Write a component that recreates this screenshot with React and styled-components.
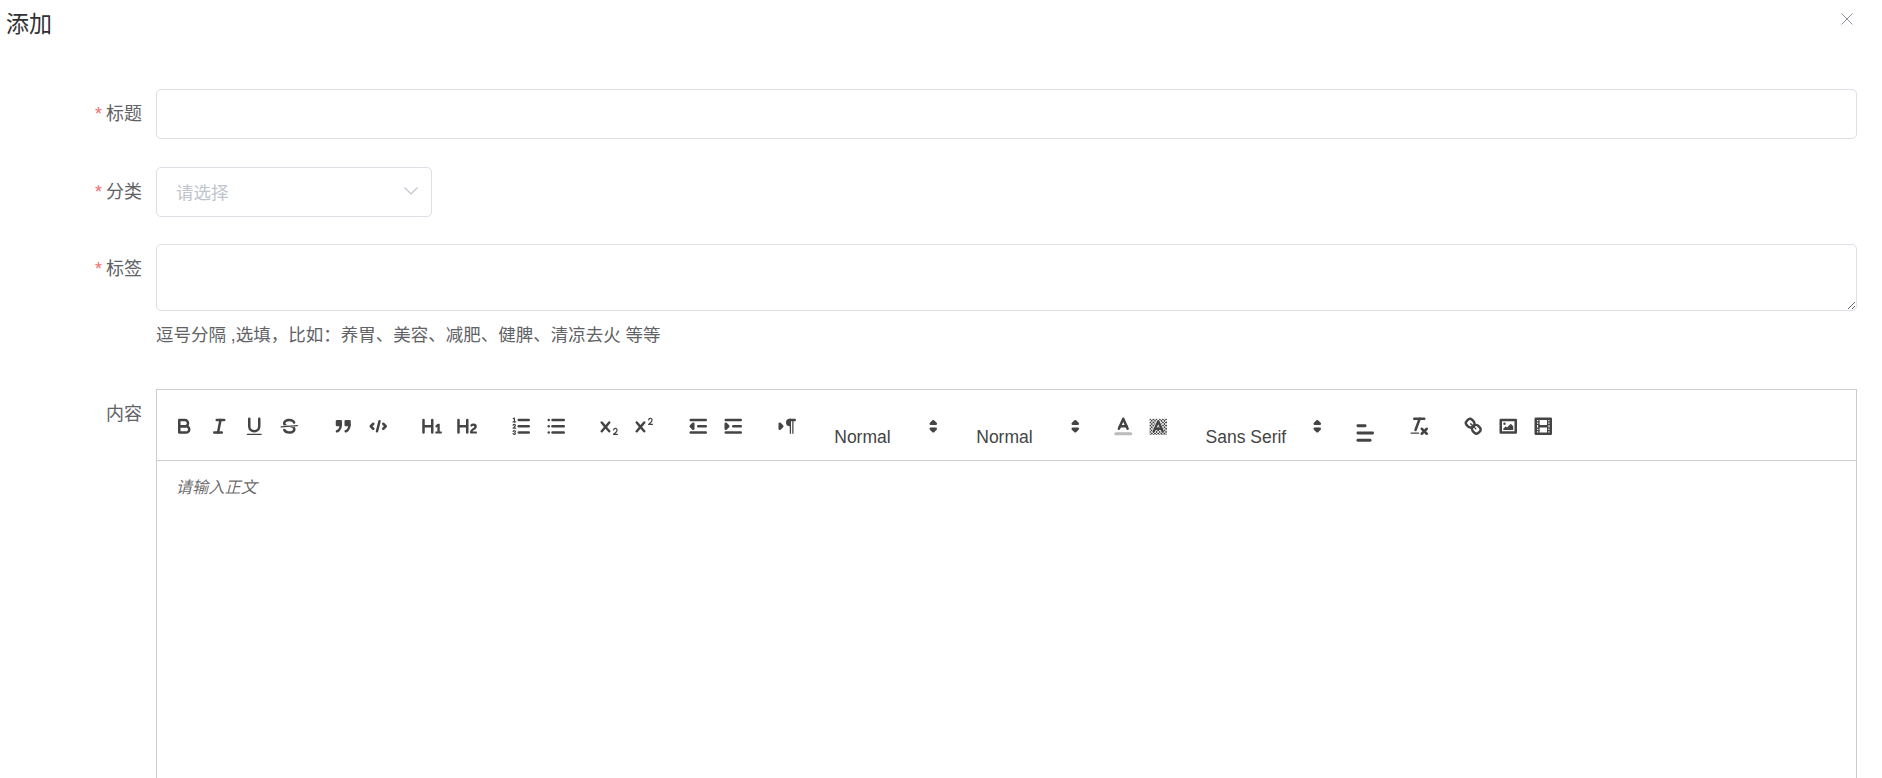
import React from 'react';
import styled, { createGlobalStyle } from 'styled-components';

const GlobalStyle = createGlobalStyle`
  html, body {
    margin: 0;
    height: 100%;
    overflow: hidden;
    background: #fff;
  }
  body {
    font-family: "Liberation Sans", "Noto Sans CJK SC", sans-serif;
  }
`

const Page = styled.div`
  height: 778px;
  overflow: hidden;
  font-family: "Liberation Sans", "Noto Sans CJK SC", sans-serif;
`

const Header = styled.div`
  display: flex;
  justify-content: space-between;
  height: 89px;
  padding: 10px 29px 0 6px;
  box-sizing: border-box;
`

const Title = styled.div`
  font-size: 23px;
  line-height: 28px;
  color: #303133;
`

const CloseButton = styled.div`
  width: 12px;
  height: 12px;
  margin-top: 3px;
  line-height: 0;
`

const Row = styled.div`
  display: flex;
  margin-bottom: ${props => props.gap}px;
  padding-right: 25px;
`

const RowLabel = styled.label`
  flex: 0 0 156px;
  height: 50px;
  box-sizing: border-box;
  padding: 1px 14px 0 0;
  text-align: right;
  font-size: 18px;
  line-height: 49px;
  color: #606266;
`

const Required = styled.span`
  color: #f56c6c;
  margin-right: 4px;
`

const Field = styled.div`
  flex: 1;
  min-width: 0;
`

const TextInput = styled.input`
  display: block;
  width: 100%;
  height: 50px;
  box-sizing: border-box;
  border: 1px solid #dcdfe6;
  border-radius: 5px;
  outline: none;
  background: #fff;
`

const SelectBox = styled.div`
  display: flex;
  align-items: center;
  justify-content: space-between;
  width: 276px;
  height: 50px;
  box-sizing: border-box;
  border: 1px solid #dcdfe6;
  border-radius: 5px;
  padding: 0 13px 2px 19px;
  font-size: 17.5px;
  color: #c0c4cc;
`

const Chevron = styled.svg`
  width: 14px;
  height: 8px;
`

const TextArea = styled.textarea`
  display: block;
  width: 100%;
  height: 67px;
  box-sizing: border-box;
  border: 1px solid #dcdfe6;
  border-radius: 5px;
  outline: none;
  resize: vertical;
  background: #fff;
`

const Help = styled.div`
  margin-top: 9px;
  font-size: 17.5px;
  line-height: 30px;
  color: #606266;
  white-space: pre;
`

const Editor = styled.div`
  height: 560px;
  border: 1px solid #ccc;
  box-sizing: border-box;
`

const Toolbar = styled.div`
  display: flex;
  align-items: center;
  height: 71px;
  padding: 2px 0 0 10px;
  box-sizing: border-box;
  border-bottom: 1px solid #ccc;
`

const ToolGroup = styled.div`
  display: flex;
  align-items: center;
  margin-right: 18.75px;
`

const ToolButton = styled.div`
  flex: 0 0 35px;
  height: 30px;
  padding: 3.75px 6.25px;
  box-sizing: border-box;
  line-height: 0;
`

const ToolSvg = styled.svg`
  width: 22.5px;
  height: 22.5px;
  overflow: visible;

  .s {
    fill: none;
    stroke: #444;
    stroke-width: 2;
    stroke-linecap: round;
    stroke-linejoin: round;
  }
  .t {
    fill: none;
    stroke: #444;
    stroke-width: 1;
    stroke-linecap: round;
    stroke-linejoin: round;
  }
  .f {
    fill: #444;
  }
  .fs {
    fill: #444;
    stroke: #444;
    stroke-width: 2;
    stroke-linecap: round;
    stroke-linejoin: round;
  }
  .arrow {
    fill: #444;
    stroke: #444;
    stroke-width: 2;
    stroke-linejoin: round;
  }
  .label {
    fill: none;
    stroke: #bbb;
    stroke-width: 2.4;
    stroke-linecap: round;
  }
  .halo {
    fill: none;
    stroke: #fff;
    stroke-width: 3;
    stroke-linejoin: round;
  }
`

const Picker = styled.div`
  flex: 0 0 ${props => props.width}px;
  display: flex;
  align-items: center;
  padding-left: 11px;
  box-sizing: border-box;
`

const PickerText = styled.span`
  flex: 0 0 ${props => props.width}px;
  padding-top: 22px;
  font-size: 17.5px;
  line-height: 22px;
  color: #444;
`

const AlignButton = styled.div`
  flex: 0 0 35px;
  padding: 14px 6.25px 0;
  box-sizing: border-box;
  line-height: 0;
`

const AlignSvg = styled(ToolSvg)`
  height: 26px;
`

const EditorBody = styled.div`
  padding: 15px 18.75px;
  font-size: 16.25px;
  line-height: 23px;
  font-style: italic;
  color: rgba(0, 0, 0, 0.6);
`

const Icon = ({ children }) => (
  <ToolButton>
    <ToolSvg viewBox="0 0 18 18">{children}</ToolSvg>
  </ToolButton>
)

const Arrows = () => (
  <ToolSvg viewBox="0 0 18 18">
    <polygon className="arrow" points="7 11 9 13 11 11 7 11" />
    <polygon className="arrow" points="7 7 9 5 11 7 7 7" />
  </ToolSvg>
)

const PickerBox = ({ label, width, textWidth }) => (
  <Picker width={width}>
    <PickerText width={textWidth}>{label}</PickerText>
    <Arrows />
  </Picker>
)

const xMark = "M9.65,5.241a1,1,0,0,0-1.409.108L6,7.964,3.759,5.349A1,1,0,0,0,2.192,6.59178Q2.21835,6.6255,2.247,6.657L4.684,9.5,2.247,12.343A1,1,0,0,0,3.762,13.65L6,11.036l2.241,2.615a1,1,0,0,0,1.519-1.3L7.316,9.5,9.753,6.657A1,1,0,0,0,9.65,5.241Z"

export default function App() {
  return (
    <Page>
      <GlobalStyle />
      <Header>
        <Title>添加</Title>
        <CloseButton>
          <svg width="12" height="12" viewBox="0 0 12 12">
            <path d="M0.5 0.5L11.5 11.5M11.5 0.5L0.5 11.5" stroke="#909399" strokeWidth="1" fill="none" />
          </svg>
        </CloseButton>
      </Header>

      <Row gap={28}>
        <RowLabel><Required>*</Required>标题</RowLabel>
        <Field><TextInput /></Field>
      </Row>

      <Row gap={27}>
        <RowLabel><Required>*</Required>分类</RowLabel>
        <Field>
          <SelectBox>
            请选择
            <Chevron viewBox="0 0 14 8">
              <path d="M0.5 0.5L7 7L13.5 0.5" stroke="#c0c4cc" strokeWidth="1.2" fill="none" />
            </Chevron>
          </SelectBox>
        </Field>
      </Row>

      <Row gap={39}>
        <RowLabel><Required>*</Required>标签</RowLabel>
        <Field>
          <TextArea />
          <Help>逗号分隔 ,选填，比如：养胃、美容、减肥、健脾、清凉去火 等等</Help>
        </Field>
      </Row>

      <Row gap={0}>
        <RowLabel>内容</RowLabel>
        <Field>
          <Editor>
            <Toolbar>
              <ToolGroup>
                <Icon>
                  <path className="s" d="M5,4H9.5A2.5,2.5,0,0,1,12,6.5v0A2.5,2.5,0,0,1,9.5,9H5A0,0,0,0,1,5,9V4A0,0,0,0,1,5,4Z" />
                  <path className="s" d="M5,9h5.5A2.5,2.5,0,0,1,13,11.5v0A2.5,2.5,0,0,1,10.5,14H5a0,0,0,0,1,0,0V9A0,0,0,0,1,5,9Z" />
                </Icon>
                <Icon>
                  <line className="s" x1="7" x2="13" y1="4" y2="4" />
                  <line className="s" x1="5" x2="11" y1="14" y2="14" />
                  <line className="s" x1="8" x2="10" y1="14" y2="4" />
                </Icon>
                <Icon>
                  <path className="s" d="M5,3V9a4.012,4.012,0,0,0,4,4H9a4.012,4.012,0,0,0,4-4V3" />
                  <rect className="f" height="1" rx=".5" ry=".5" width="12" x="3" y="15" />
                </Icon>
                <Icon>
                  <line className="t" x1="15.5" x2="2.5" y1="8.5" y2="9.5" />
                  <path className="f" d="M9.007,8C6.542,7.791,6,7.519,6,6.5,6,5.792,7.283,5,9,5c1.571,0,2.765.679,2.969,1.309a1,1,0,0,0,1.9-.617C13.356,4.106,11.354,3,9,3,6.2,3,4,4.538,4,6.5a3.2,3.2,0,0,0,.5,1.843Z" />
                  <path className="f" d="M8.984,10C11.457,10.208,12,10.479,12,11.5c0,.708-1.283,1.5-3,1.5-1.571,0-2.765-.679-2.969-1.309a1,1,0,1,0-1.9.617C4.644,13.894,6.646,15,9,15c2.8,0,5-1.538,5-3.5a3.2,3.2,0,0,0-.5-1.843Z" />
                </Icon>
              </ToolGroup>

              <ToolGroup>
                <Icon>
                  <rect className="fs" height="3" width="3" x="4" y="5" />
                  <rect className="fs" height="3" width="3" x="11" y="5" />
                  <path className="s" d="M7,8c0,4.031-3,5-3,5" />
                  <path className="s" d="M14,8c0,4.031-3,5-3,5" />
                </Icon>
                <Icon>
                  <polyline className="s" points="5 7 3 9 5 11" />
                  <polyline className="s" points="13 7 15 9 13 11" />
                  <line className="s" x1="10" x2="8" y1="5" y2="13" />
                </Icon>
              </ToolGroup>

              <ToolGroup>
                <Icon>
                  <path className="f" d="M10,4V14a1,1,0,0,1-2,0V10H3v4a1,1,0,0,1-2,0V4A1,1,0,0,1,3,4V8H8V4a1,1,0,0,1,2,0Zm6.06787,9.209H14.98975V7.59082a.54085.54085,0,0,0-.605-.60547h-.62744a1.01119,1.01119,0,0,0-.748.29688L11.645,8.56641a.5435.5435,0,0,0-.022.8584l.28613.30762a.53861.53861,0,0,0,.84717.0332l.09912-.08789a1.2137,1.2137,0,0,0,.2417-.35254h.02246s-.01123.30859-.01123.60547V13.209H12.041a.54085.54085,0,0,0-.605.60547v.43945a.54085.54085,0,0,0,.605.60547h4.02686a.54085.54085,0,0,0,.605-.60547v-.43945A.54085.54085,0,0,0,16.06787,13.209Z" />
                </Icon>
                <Icon>
                  <path className="f" d="M16.73975,13.81445v.43945a.54085.54085,0,0,1-.605.60547H11.855a.58392.58392,0,0,1-.64893-.60547V14.0127c0-2.90527,3.39941-3.42187,3.39941-4.55469a.77675.77675,0,0,0-.84717-.78125,1.17684,1.17684,0,0,0-.83594.38477c-.2749.26367-.561.374-.85791.13184l-.4292-.34082c-.30811-.24219-.38525-.51758-.1543-.81445a2.97155,2.97155,0,0,1,2.45361-1.17676,2.45393,2.45393,0,0,1,2.68408,2.40918c0,2.45312-3.1792,2.92676-3.27832,3.93848h2.79443A.54085.54085,0,0,1,16.73975,13.81445ZM9,3A.99974.99974,0,0,0,8,4V8H3V4A1,1,0,0,0,1,4V14a1,1,0,0,0,2,0V10H8v4a1,1,0,0,0,2,0V4A.99974.99974,0,0,0,9,3Z" />
                </Icon>
              </ToolGroup>

              <ToolGroup>
                <Icon>
                  <line className="s" x1="7" x2="15" y1="4" y2="4" />
                  <line className="s" x1="7" x2="15" y1="9" y2="9" />
                  <line className="s" x1="7" x2="15" y1="14" y2="14" />
                  <line className="t" x1="2.5" x2="4.5" y1="5.5" y2="5.5" />
                  <path className="f" d="M3.5,6A0.5,0.5,0,0,1,3,5.5V3.085l-0.276.138A0.5,0.5,0,0,1,2.053,3c-0.124-.247-0.023-0.324.224-0.447l1-.5A0.5,0.5,0,0,1,4,2.5v3A0.5,0.5,0,0,1,3.5,6Z" />
                  <path className="t" d="M4.5,10.5h-2c0-.234,1.85-1.076,1.85-2.234A0.959,0.959,0,0,0,2.5,8.156" />
                  <path className="t" d="M2.5,14.846a0.959,0.959,0,0,0,1.85-.109A0.7,0.7,0,0,0,3.75,14a0.688,0.688,0,0,0,.6-0.736,0.959,0.959,0,0,0-1.85-.109" />
                </Icon>
                <Icon>
                  <line className="s" x1="6" x2="15" y1="4" y2="4" />
                  <line className="s" x1="6" x2="15" y1="9" y2="9" />
                  <line className="s" x1="6" x2="15" y1="14" y2="14" />
                  <line className="s" x1="3" x2="3" y1="4" y2="4" />
                  <line className="s" x1="3" x2="3" y1="9" y2="9" />
                  <line className="s" x1="3" x2="3" y1="14" y2="14" />
                </Icon>
              </ToolGroup>

              <ToolGroup>
                <Icon>
                  <path className="f" d="M15.5,15H13.861a3.858,3.858,0,0,0,1.914-2.975,1.8,1.8,0,0,0-1.6-1.751A1.921,1.921,0,0,0,12.021,11.7a0.50013,0.50013,0,1,0,.957.291h0a0.914,0.914,0,0,1,1.053-.725,0.81,0.81,0,0,1,.744.762c0,1.076-1.16971,1.86982-1.93971,2.43082A1.45639,1.45639,0,0,0,12,15.5a0.5,0.5,0,0,0,.5.5h3A0.5,0.5,0,0,0,15.5,15Z" />
                  <path className="f" d={xMark} />
                </Icon>
                <Icon>
                  <path className="f" d="M15.5,7H13.861a4.015,4.015,0,0,0,1.914-2.975,1.8,1.8,0,0,0-1.6-1.751A1.922,1.922,0,0,0,12.021,3.7a0.5,0.5,0,1,0,.957.291,0.917,0.917,0,0,1,1.053-.725,0.81,0.81,0,0,1,.744.762c0,1.077-1.164,1.925-1.934,2.486A1.423,1.423,0,0,0,12,7.5a0.5,0.5,0,0,0,.5.5h3A0.5,0.5,0,0,0,15.5,7Z" />
                  <path className="f" d={xMark} />
                </Icon>
              </ToolGroup>

              <ToolGroup>
                <Icon>
                  <line className="s" x1="3" x2="15" y1="14" y2="14" />
                  <line className="s" x1="3" x2="15" y1="4" y2="4" />
                  <line className="s" x1="9" x2="15" y1="9" y2="9" />
                  <polyline className="fs" points="5 7 5 11 3 9 5 7" />
                </Icon>
                <Icon>
                  <line className="s" x1="3" x2="15" y1="14" y2="14" />
                  <line className="s" x1="3" x2="15" y1="4" y2="4" />
                  <line className="s" x1="9" x2="15" y1="9" y2="9" />
                  <polyline className="fs" points="3 7 3 11 5 9 3 7" />
                </Icon>
              </ToolGroup>

              <ToolGroup>
                <Icon>
                  <polygon className="fs" points="3 11 5 9 3 7 3 11" />
                  <line className="s" x1="15" x2="11" y1="4" y2="4" />
                  <path className="f" d="M11,3a3,3,0,0,0,0,6h1V3H11Z" />
                  <rect className="f" height="11" width="1" x="11" y="4" />
                  <rect className="f" height="11" width="1" x="13" y="4" />
                </Icon>
              </ToolGroup>

              <PickerBox label="Normal" width={142} textWidth={87.5} />
              <PickerBox label="Normal" width={140.5} textWidth={88} />

              <ToolGroup>
                <Icon>
                  <line className="label" x1="3" x2="15" y1="15" y2="15" />
                  <polyline className="s" points="5.5 11 9 3 12.5 11" />
                  <line className="s" x1="11.63" x2="6.38" y1="9" y2="9" />
                </Icon>
                <ToolButton>
                  <ToolSvg viewBox="0 0 18 18">
                    <defs>
                      <pattern id="hatch" width="1.8" height="1.8" patternUnits="userSpaceOnUse" patternTransform="rotate(45)">
                        <rect width="1.3" height="1.3" fill="#444" />
                      </pattern>
                    </defs>
                    <rect x="2" y="3" width="14" height="13" fill="url(#hatch)" />
                    <polyline className="halo" points="5.5 13 9 5 12.5 13" />
                    <polyline className="s" points="5.5 13 9 5 12.5 13" />
                    <line className="s" x1="11.63" x2="6.38" y1="11" y2="11" />
                  </ToolSvg>
                </ToolButton>
              </ToolGroup>

              <PickerBox label="Sans Serif" width={153.5} textWidth={100} />

              <ToolGroup>
                <AlignButton>
                  <AlignSvg viewBox="0 0 18 18" preserveAspectRatio="none">
                    <line className="s" x1="3" x2="15" y1="9" y2="9" />
                    <line className="s" x1="3" x2="13" y1="14" y2="14" />
                    <line className="s" x1="3" x2="9" y1="4" y2="4" />
                  </AlignSvg>
                </AlignButton>
              </ToolGroup>

              <ToolGroup>
                <Icon>
                  <line className="s" x1="5" x2="13" y1="3" y2="3" />
                  <line className="s" x1="6" x2="9.35" y1="12" y2="3" />
                  <line className="s" x1="11" x2="15" y1="11" y2="15" />
                  <line className="s" x1="15" x2="11" y1="11" y2="15" />
                  <rect className="f" height="1" rx=".5" ry=".5" width="7" x="2" y="14" />
                </Icon>
              </ToolGroup>

              <ToolGroup>
                <Icon>
                  <line className="t" x1="7" x2="11" y1="7" y2="11" />
                  <path className="s" d="M8.9,4.577a3.476,3.476,0,0,1,.36,4.679A3.476,3.476,0,0,1,4.577,8.9C3.185,7.5,2.035,6.4,4.217,4.217S7.5,3.185,8.9,4.577Z" />
                  <path className="s" d="M13.423,9.1a3.476,3.476,0,0,0-4.679-.36,3.476,3.476,0,0,0,.36,4.679c1.392,1.392,2.5,2.542,4.679.36S14.815,10.5,13.423,9.1Z" />
                </Icon>
                <Icon>
                  <rect className="s" height="10" width="12" x="3" y="4" />
                  <circle className="f" cx="6" cy="7" r="1" />
                  <polyline className="f" points="5 12 5 11 7 9 8 10 11 7 13 9 13 12 5 12" />
                </Icon>
                <Icon>
                  <rect className="s" height="12" width="12" x="3" y="3" />
                  <rect className="f" height="12" width="1" x="5" y="3" />
                  <rect className="f" height="12" width="1" x="12" y="3" />
                  <rect className="f" height="2" width="8" x="5" y="8" />
                  <rect className="f" height="1" width="3" x="3" y="5" />
                  <rect className="f" height="1" width="3" x="3" y="7" />
                  <rect className="f" height="1" width="3" x="3" y="10" />
                  <rect className="f" height="1" width="3" x="3" y="12" />
                  <rect className="f" height="1" width="3" x="12" y="5" />
                  <rect className="f" height="1" width="3" x="12" y="7" />
                  <rect className="f" height="1" width="3" x="12" y="10" />
                  <rect className="f" height="1" width="3" x="12" y="12" />
                </Icon>
              </ToolGroup>
            </Toolbar>
            <EditorBody>请输入正文</EditorBody>
          </Editor>
        </Field>
      </Row>
    </Page>
  )
}
